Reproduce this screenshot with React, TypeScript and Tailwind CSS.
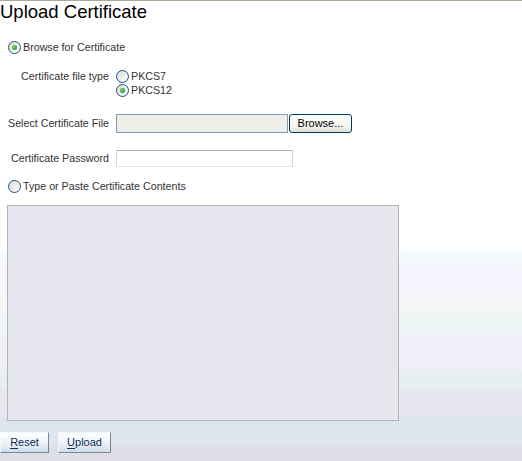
import React from 'react'

function Radio({ checked = false }: { checked?: boolean }) {
  return (
    <span className="flex h-[13px] w-[13px] shrink-0 items-center justify-center rounded-full border border-[#1c5180] bg-[linear-gradient(135deg,#dcdcd5,#ffffff)]">
      {checked && (
        <span className="h-[5px] w-[5px] rounded-full bg-[radial-gradient(circle_at_40%_40%,#6ee06e,#21a121_70%)]" />
      )}
    </span>
  )
}

function XpButton({ label }: { label: string }) {
  return (
    <button className="h-[21px] w-full border border-t-[#f4f6f8] border-l-[#f4f6f8] border-r-[#7c8590] border-b-[#7c8590] bg-[linear-gradient(#ffffff,#edf2f8_55%,#cfdbe9)] px-0 text-[11px] text-[#0b2f55]">
      <span className="underline underline-offset-2">{label[0]}</span>
      {label.slice(1)}
    </button>
  )
}

export default function App() {
  return (
    <div
      className="relative h-[461px] w-[522px] overflow-hidden bg-[linear-gradient(#ffffff_0px,#ffffff_248px,#f3fcfd_252px,#f5f6fd_265px,#f5f6fd_292px,#f5f5f5_296px,#f5f5f5_312px,#eef5f5_318px,#eef5f5_330px,#eff0f8_336px,#eff0f8_366px,#e6eef0_373px,#e6eef0_388px,#e6e6ef_392px,#e6e6ef_414px,#dde5ee_420px,#dde5ee_444px,#dedee6_448px)] text-[10.7px] text-[#333]"
      style={{ fontFamily: '"Liberation Sans", Arial, sans-serif' }}
    >
      <div className="h-px bg-[#aaa896]" />
      <h1 className="h-[22px] text-[18.5px] leading-[22px] font-normal text-black">Upload Certificate</h1>

      <label className="mt-[18px] flex h-[13px] items-center gap-[2px] pl-[8px]">
        <Radio checked />
        <span>Browse for Certificate</span>
      </label>

      <div className="mt-[16px] flex gap-[7px]">
        <div className="flex h-[13px] w-[109px] items-center justify-end">Certificate file type</div>
        <div className="flex flex-col gap-[1px]">
          <label className="flex h-[13px] items-center gap-[2px]">
            <Radio />
            <span>PKCS7</span>
          </label>
          <label className="flex h-[13px] items-center gap-[2px]">
            <Radio checked />
            <span>PKCS12</span>
          </label>
        </div>
      </div>

      <div className="mt-[17px] flex h-[19px] items-center gap-[7px]">
        <div className="w-[109px] text-right">Select Certificate File</div>
        <div className="h-[19px] w-[172px] border border-[#7f9db9] bg-[#efeee8]" />
        <button className="ml-[-6px] h-[19px] w-[63px] rounded-[3px] border border-[#003c74] bg-[linear-gradient(#ffffff,#f4f3ee_70%,#dedcd0)] text-[11px] text-black">
          Browse...
        </button>
      </div>

      <div className="mt-[17px] flex h-[17px] items-center gap-[7px]">
        <div className="w-[109px] text-right">Certificate Password</div>
        <div className="h-[17px] w-[177px] border border-t-[#a9b5c2] border-l-[#d2d8e2] border-r-[#d2d8e2] border-b-[#e2e6ec] bg-white" />
      </div>

      <label className="mt-[13px] flex h-[13px] items-center gap-[2px] pl-[8px]">
        <Radio />
        <span>Type or Paste Certificate Contents</span>
      </label>

      <div className="ml-[7px] mt-[12px] h-[216px] w-[392px] border border-[#b4b4b8] bg-[#e6e6ef]" />

      <div className="mt-[11px] flex gap-[9px]">
        <div className="w-[49px]">
          <XpButton label="Reset" />
        </div>
        <div className="w-[53px]">
          <XpButton label="Upload" />
        </div>
      </div>
    </div>
  )
}
